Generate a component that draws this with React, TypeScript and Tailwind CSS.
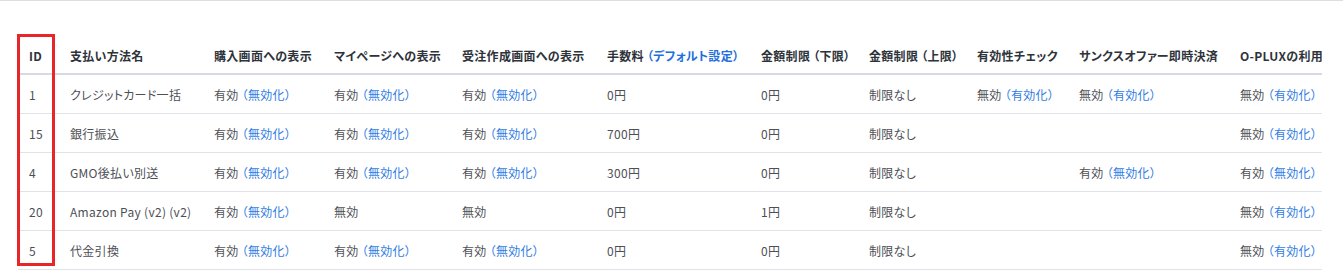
const headers: { label: string; link?: string; w: string }[] = [
  { label: "ID", w: "w-[41px]" },
  { label: "支払い方法名", w: "w-[144px]" },
  { label: "購入画面への表示", w: "w-[120px]" },
  { label: "マイページへの表示", w: "w-[128px]" },
  { label: "受注作成画面への表示", w: "w-[145px]" },
  { label: "手数料", link: "デフォルト設定", w: "w-[154px]" },
  { label: "金額制限（下限）", w: "w-[108px]" },
  { label: "金額制限（上限）", w: "w-[108px]" },
  { label: "有効性チェック", w: "w-[102px]" },
  { label: "サンクスオファー即時決済", w: "w-[161px]" },
  { label: "O-PLUXの利用", w: "w-[160px]" },
];

// "on" = 有効（無効化）, "off" = 無効（有効化）, "none" = 無効, "" = empty
type Cell = string | { state: "on" | "off" | "none" };

const on = { state: "on" as const };
const off = { state: "off" as const };
const none = { state: "none" as const };

const rows: Cell[][] = [
  ["1", "クレジットカード一括", on, on, on, "0円", "0円", "制限なし", off, off, off],
  ["15", "銀行振込", on, on, on, "700円", "0円", "制限なし", "", "", off],
  ["4", "GMO後払い別送", on, on, on, "300円", "0円", "制限なし", "", on, on],
  ["20", "Amazon Pay (v2) (v2)", on, none, none, "0円", "1円", "制限なし", "", "", off],
  ["5", "代金引換", on, on, on, "0円", "0円", "制限なし", "", "", off],
];

// full-width parens get a little air around them, like the original font
const Paren = ({ children }: { children: React.ReactNode }) => (
  <>
    <span className="ml-[3px]">（</span>
    {children}
    <span className="mr-[2px]">）</span>
  </>
);

const withParens = (s: string) => {
  const m = s.match(/^(.*)（(.*)）$/);
  if (!m) return s;
  return (
    <>
      {m[1]}
      <Paren>{m[2]}</Paren>
    </>
  );
};

const Toggle = ({ state }: { state: "on" | "off" | "none" }) => {
  if (state === "none") return <span>無効</span>;
  return (
    <span>
      {state === "on" ? "有効" : "無効"}
      <a className="text-[#2f7ce3] cursor-pointer">
        <Paren>{state === "on" ? "無効化" : "有効化"}</Paren>
      </a>
    </span>
  );
};

export default function App() {
  return (
    <div
      className="relative min-h-[273px] bg-white border-t border-[#dedede]"
      style={{ fontFamily: '"Noto Sans CJK JP", "Noto Sans", sans-serif' }}
    >
      <div className="ml-[18px] mt-[35px] w-[1304px] overflow-hidden">
        <table className="table-fixed border-collapse w-[1371px] text-[12px] tracking-[0.3px] [font-feature-settings:'palt']">
          <colgroup>
            {headers.map((h) => (
              <col key={h.label} className={h.w} />
            ))}
          </colgroup>
          <thead>
            <tr className="h-[38px] border-b-2 border-[#d7dae5]">
              {headers.map((h) => (
                <th
                  key={h.label}
                  className="px-[11px] pt-[2px] text-left font-bold text-[#2e333a] whitespace-nowrap overflow-hidden"
                >
                  {withParens(h.label)}
                  {h.link && (
                    <a className="text-[#1f6fdc]">
                      <Paren>{h.link}</Paren>
                    </a>
                  )}
                </th>
              ))}
            </tr>
          </thead>
          <tbody>
            {rows.map((r) => (
              <tr key={r[0] as string} className="h-[39px] border-b border-[#e2e3ea]">
                {r.map((c, i) => (
                  <td
                    key={i}
                    className="px-[11px] pt-[2px] text-left text-[#4d4f55] whitespace-nowrap overflow-hidden"
                  >
                    {typeof c === "string" ? c : <Toggle state={c.state} />}
                  </td>
                ))}
              </tr>
            ))}
          </tbody>
        </table>
      </div>
      {/* highlight around ID column */}
      <div className="absolute left-[17px] top-[33px] w-[38px] h-[232px] border-[3px] border-[#e8262a] pointer-events-none" />
    </div>
  );
}
